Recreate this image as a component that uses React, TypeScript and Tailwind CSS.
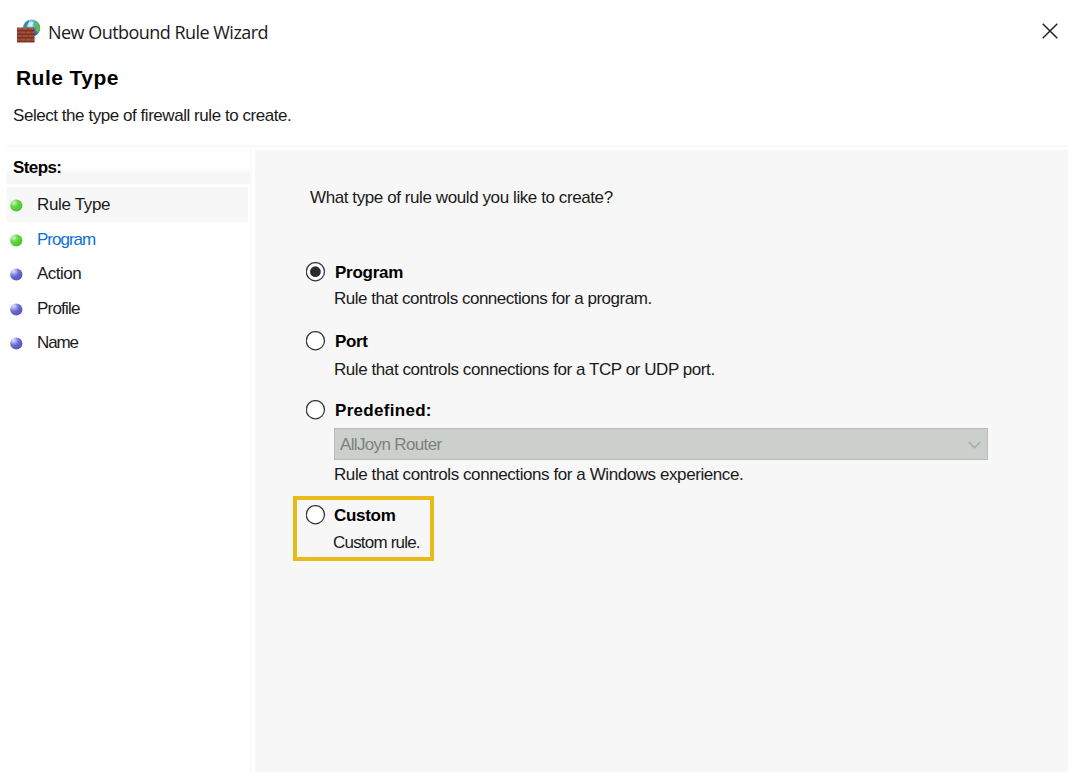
import React from "react";

const steps = [
  { label: "Rule Type", done: true, current: true, cls: "text-[#1a1a1a] tracking-[-0.35px]" },
  { label: "Program", done: true, current: false, cls: "text-[#0f6fd6] tracking-[-1px]" },
  { label: "Action", done: false, current: false, cls: "text-[#1a1a1a] tracking-[-0.5px]" },
  { label: "Profile", done: false, current: false, cls: "text-[#1a1a1a] tracking-[-0.8px]" },
  { label: "Name", done: false, current: false, cls: "text-[#1a1a1a] tracking-[-1.1px]" },
];

function FirewallIcon() {
  return (
    <svg width="24" height="24" viewBox="0 0 24 24" className="block">
      <defs>
        <radialGradient id="globe" cx="0.4" cy="0.3" r="0.75">
          <stop offset="0" stopColor="#c8f0ff" />
          <stop offset="0.45" stopColor="#4fa6e8" />
          <stop offset="1" stopColor="#1750a8" />
        </radialGradient>
      </defs>
      <circle cx="14.6" cy="9" r="8.6" fill="url(#globe)" />
      <path d="M6.3 7.5 Q7.5 2.8 11.5 1.2 L12.5 3.2 L10.5 5.5 L9.5 8.5 Z" fill="#3f8f8a" />
      <path d="M17 3.5 L20.6 3.2 Q23.4 6.5 22.9 11 L20.8 14 L19 11.5 L19 8.5 L16.8 6.6 Z" fill="#5cbf45" />
      <path d="M11.5 3.5 Q14 1.6 16.5 3.8 L15 7.8 L11.5 7.6 Z" fill="#d9f6ff" opacity="0.7" />
      <rect x="0" y="8.5" width="17.5" height="14.8" fill="#8c3f2d" />
      <path d="M0.8 9.9h3.8M6 9.9h4.5M12 9.9h4.6M0.3 13.4h2.2M3.8 13.4h4.4M9.5 13.4h4.4M15.2 13.4h2M0.8 17h3.8M6 17h4.5M12 17h4.6M0.3 20.6h2.2M3.8 20.6h4.4M9.5 20.6h4.4M15.2 20.6h2" stroke="#a9563f" strokeWidth="1.7" />
      <path d="M0 11.7h17.5M0 15.2h17.5M0 18.8h17.5M0 22.8h17.5" stroke="#6d2c20" strokeWidth="0.8" />
    </svg>
  );
}

function Orb({ done }: { done: boolean }) {
  return (
    <svg width="13" height="13" viewBox="0 0 13 13" className="mt-[3px] block shrink-0">
      <defs>
        <radialGradient id="green" cx="0.3" cy="0.28" r="0.75">
          <stop offset="0" stopColor="#d4f5c8" />
          <stop offset="0.45" stopColor="#62d63f" />
          <stop offset="1" stopColor="#4cc430" />
        </radialGradient>
        <radialGradient id="blue" cx="0.28" cy="0.22" r="0.8">
          <stop offset="0" stopColor="#e2e6fa" />
          <stop offset="0.55" stopColor="#6a6bd0" />
          <stop offset="1" stopColor="#5656bc" />
        </radialGradient>
      </defs>
      <circle cx="6.3" cy="6.5" r="6.1" fill={done ? "url(#green)" : "url(#blue)"} />
    </svg>
  );
}

function Radio({ checked = false }: { checked?: boolean }) {
  return (
    <svg width="20" height="20" viewBox="0 0 20 20" className="block shrink-0">
      <circle cx="9.4" cy="9.7" r="9.1" fill="#fff" stroke="#3a3a3a" strokeWidth="1.3" />
      {checked && <circle cx="9.4" cy="9.7" r="5.4" fill="#2b2b2b" />}
    </svg>
  );
}

function Option({ label, cls, checked }: { label: string; cls: string; checked?: boolean }) {
  return (
    <div className="flex h-5 items-center">
      <Radio checked={checked} />
      <span className={`pt-0.5 font-bold text-black ${cls}`}>{label}</span>
    </div>
  );
}

export default function App() {
  return (
    <div className="flex h-[772px] w-[1080px] flex-col overflow-hidden bg-white font-['Liberation_Sans',Arial,sans-serif] text-[17px] leading-5 whitespace-nowrap text-[#1a1a1a]">
      <header className="h-[145px] shrink-0">
        <div className="flex h-[62px] items-center pl-[17px] pr-[22px]">
          <FirewallIcon />
          <h1 className="ml-[7px] pt-0.5 font-['Open_Sans','Noto_Sans',sans-serif] text-[18px] leading-6 tracking-[-0.53px]">New Outbound Rule Wizard</h1>
          <svg width="16" height="16" viewBox="0 0 16 16" className="ml-auto block">
            <path d="M0.7 0.7L15.3 15.3M15.3 0.7L0.7 15.3" stroke="#222" strokeWidth="1.5" />
          </svg>
        </div>
        <h2 className="mt-1 pl-4 text-[21px] leading-6 font-bold tracking-[0.45px] text-black">Rule Type</h2>
        <p className="mt-4 pl-[13px] tracking-[-0.45px]">Select the type of firewall rule to create.</p>
      </header>
      <div className="ml-[7px] h-[2px] w-[1061px] shrink-0 bg-[#f8f8f8]" />
      <div className="ml-[7px] mt-[3px] flex w-[1061px] flex-1">
        <aside className="w-[245px] border-r-2 border-[#fafafa]">
          <div className="h-[34px] border-t border-[#fafafa] bg-linear-to-b from-white from-50% to-[#f5f6f6] to-70% pl-[6px] pt-[7px] font-bold tracking-[-0.6px] text-black">Steps:</div>
          <ul className="mt-[3px] w-[241px]">
            {steps.map((s) => (
              <li key={s.label} className={s.current ? "flex h-[34.5px] items-center bg-[#f7f7f7] pl-[3px]" : "flex h-[34.5px] items-center pl-[3px]"}>
                <Orb done={s.done} />
                <span className={`ml-[14px] pt-0.5 ${s.cls}`}>{s.label}</span>
              </li>
            ))}
          </ul>
        </aside>
        <main className="ml-[3px] flex-1 bg-[#f7f7f7] pl-[51px] pt-[38px]">
          <p className="pl-1 tracking-[-0.41px]">What type of rule would you like to create?</p>
          <div className="mt-[54px]">
            <Option label="Program" cls="ml-[9px] tracking-[-0.25px]" checked />
            <p className="mt-[7px] pl-[28px] tracking-[-0.48px]">Rule that controls connections for a program.</p>
          </div>
          <div className="mt-[22px]">
            <Option label="Port" cls="ml-[9px] tracking-[-0.4px]" />
            <p className="mt-[9px] pl-[28px] tracking-[-0.43px]">Rule that controls connections for a TCP or UDP port.</p>
          </div>
          <div className="mt-5">
            <Option label="Predefined:" cls="ml-[9px] tracking-[0.3px]" />
            <div className="ml-[28px] mt-[8px] flex h-8 w-[654px] items-center justify-between border border-[#b9bdb9] bg-[#ccd0cc] pl-[5px] pr-[6px] text-[#7d817e]">
              <span className="pt-px tracking-[-0.65px]">AllJoyn Router</span>
              <svg width="13" height="8" viewBox="0 0 13 8" className="mt-px block"><path d="M0.7 1L6.5 6.5L12.3 1" fill="none" stroke="#a9adaa" strokeWidth="1.7" /></svg>
            </div>
            <p className="mt-[5px] pl-[28px] tracking-[-0.42px]">Rule that controls connections for a Windows experience.</p>
          </div>
          <div className="-ml-[13px] mt-[11px] h-[65px] w-[141px] border-4 border-[#eabb18] pl-[9px] pt-[5px]">
            <Option label="Custom" cls="ml-[8px] tracking-[-0.3px]" />
            <p className="mt-[8px] pl-[27px] tracking-[-0.8px]">Custom rule.</p>
          </div>
        </main>
      </div>
    </div>
  );
}
